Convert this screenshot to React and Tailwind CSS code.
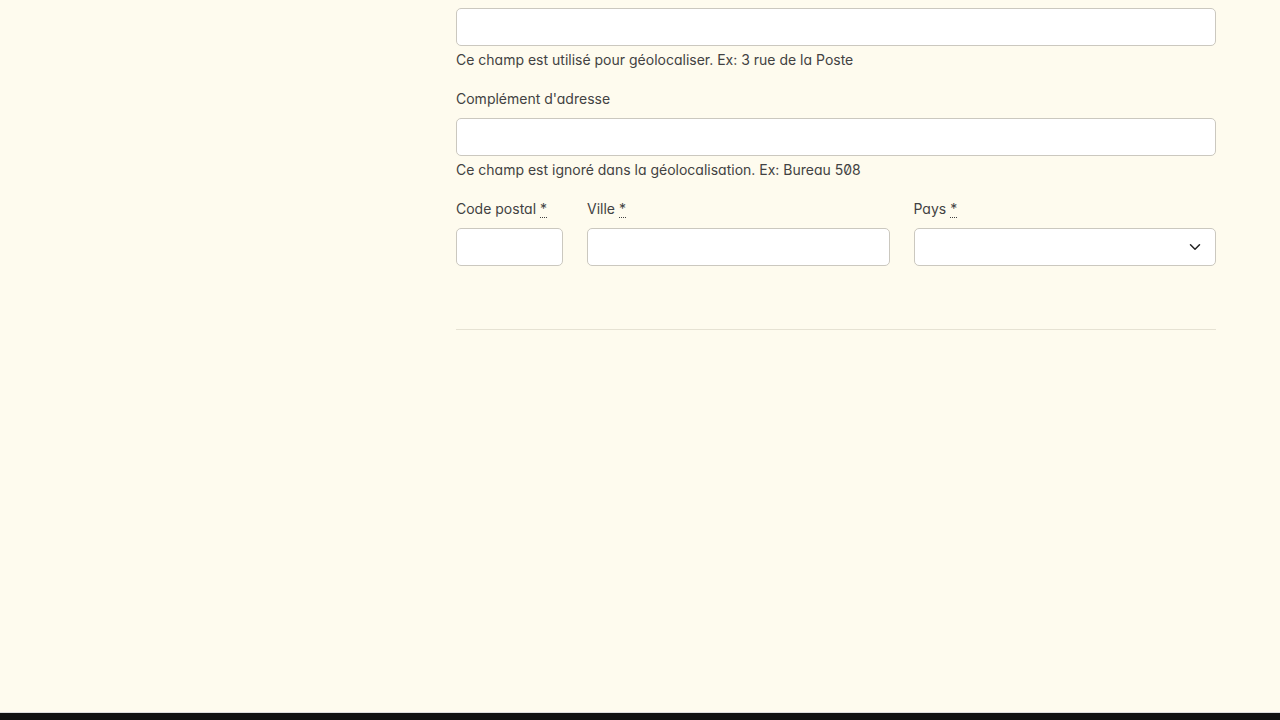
import React from "react";

function Label({ children }) {
  return (
    <label className="block text-[14px] leading-[20px] text-[#424242]">
      {children}{" "}
      <abbr title="obligatoire" className="no-underline border-b border-dotted border-[#424242] leading-none">*</abbr>
    </label>
  );
}

function Input({ className = "" }) {
  return (
    <div className={"h-[38px] bg-white border border-[#cbc8bf] rounded-[5px] " + className} />
  );
}

export default function App() {
  return (
    <div
      className="h-[720px] w-[1280px] bg-[#fefbee] flex flex-col text-[#424242] slashed-zero [font-feature-settings:'cv11','zero']"
      style={{ fontFamily: "Inter, 'Noto Sans', sans-serif" }}
    >
      <div className="flex-1 pl-[456px] pt-[8px]">
        <div className="w-[760px]">
          <Input />
          <p className="mt-[4px] text-[14px] leading-[20px]">
            Ce champ est utilisé pour géolocaliser. Ex: 3 rue de la Poste
          </p>
          <div className="mt-[19px] text-[14px] leading-[20px]">Complément d'adresse</div>
          <Input className="mt-[9px]" />
          <p className="mt-[4px] text-[14px] leading-[20px]">
            Ce champ est ignoré dans la géolocalisation. Ex: Bureau 508
          </p>
          <div className="mt-[19px] flex gap-6">
            <div className="w-[107px]">
              <Label>Code postal</Label>
              <Input className="mt-[9px]" />
            </div>
            <div className="flex-1">
              <Label>Ville</Label>
              <Input className="mt-[9px]" />
            </div>
            <div className="flex-1">
              <Label>Pays</Label>
              <div className="mt-[9px] h-[38px] bg-white border border-[#cbc8bf] rounded-[5px] flex items-center justify-end pr-[14px]">
                <svg width="12" height="8" viewBox="0 0 12 8" fill="none">
                  <path d="M1.5 1.8 L6 6.2 L10.5 1.8" stroke="#222" strokeWidth="1.5" strokeLinecap="round" strokeLinejoin="round" />
                </svg>
              </div>
            </div>
          </div>
          <div className="mt-[63px] h-px bg-[#e6e2d3]" />
        </div>
      </div>
      <div className="h-px bg-[#dcdcdc]" />
      <div className="h-[7px] bg-[#111111]" />
    </div>
  );
}
